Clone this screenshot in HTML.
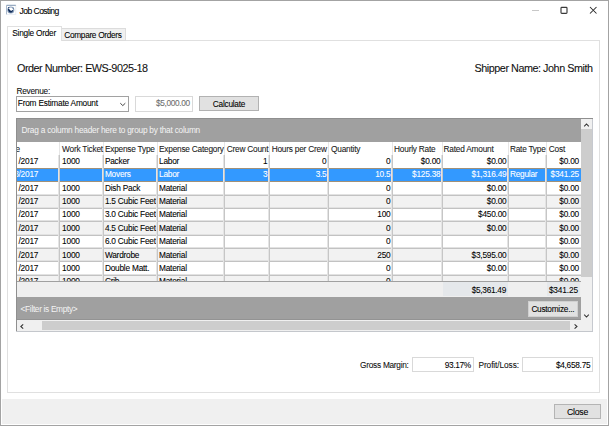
<!DOCTYPE html>
<html><head><meta charset="utf-8"><style>
html,body{margin:0;padding:0;width:609px;height:426px;overflow:hidden;background:#fff;}
body{position:relative;font-family:"Liberation Sans",sans-serif;}
.t{position:absolute;line-height:1;white-space:pre;-webkit-text-stroke:0.08px currentColor;}
.b{position:absolute;}
svg{position:absolute;}
</style></head><body>
<div class="b" style="left:0px;top:0px;width:609px;height:426px;border:1px solid #a3a3a3;box-sizing:border-box;"></div>
<svg style="left:4px;top:3px" width="14" height="14" viewBox="0 0 14 14">
<rect x="2.5" y="2.3" width="9.3" height="9" fill="none" stroke="#e3e9f1" stroke-width="0.8"/>
<path d="M2.6 2.3 H11.8" stroke="#7890ad" stroke-width="0.9"/>
<path d="M2.5 2.3 V11.3" stroke="#a3b3c7" stroke-width="0.9"/>
<circle cx="6.8" cy="7" r="3" fill="none" stroke="#8ea3be" stroke-width="1.1"/>
<path d="M3.9 6.0 Q4.2 9.9 7.1 9.8 Q9.0 9.5 9.3 6.7 L8.2 7.2 Q6.6 8.8 5.2 6.0 Z" fill="#0f2c5a"/>
<circle cx="4.6" cy="4.7" r="0.75" fill="#2f4d7b"/>
<circle cx="9.1" cy="5.1" r="0.65" fill="#45628c"/>
</svg>
<div class="t" style="top:6.82px;font-size:8.6px;color:#000;letter-spacing:-0.56px;left:19.50px;">Job Costing</div>
<div class="b" style="left:532px;top:10px;width:7px;height:1px;background:#c8c8c8;"></div>
<svg style="left:559px;top:6px" width="10" height="10" viewBox="0 0 10 10"><rect x="2" y="1.4" width="6" height="6" rx="0.8" fill="none" stroke="#3a3a3a" stroke-width="1.15"/></svg>
<svg style="left:589px;top:6px" width="10" height="10" viewBox="0 0 10 10"><path d="M1 1 L7.5 7.5 M7.5 1 L1 7.5" stroke="#2a2a2a" stroke-width="1.05"/></svg>
<div class="b" style="left:7px;top:40px;width:593px;height:353px;background:#fff;border:1px solid #e0e0e0;box-sizing:border-box;"></div>
<div class="b" style="left:61px;top:28px;width:65px;height:13px;background:#f0f0f0;border:1px solid #dcdcdc;box-sizing:border-box;"></div>
<div class="b" style="left:7px;top:26px;width:55px;height:15px;background:#fff;border:1px solid #e0e0e0;box-sizing:border-box;border-bottom:none;"></div>
<div class="t" style="top:29.17px;font-size:8.3px;color:#000;letter-spacing:-0.245px;left:12.30px;">Single Order</div>
<div class="t" style="top:30.97px;font-size:8.3px;color:#000;letter-spacing:-0.323px;left:64.30px;">Compare Orders</div>
<div class="t" style="top:62.56px;font-size:10.8px;color:#111;letter-spacing:-0.49px;left:17.00px;">Order Number: EWS-9025-18</div>
<div class="t" style="top:62.86px;font-size:10.8px;color:#111;letter-spacing:-0.457px;left:474.50px;">Shipper Name: John Smith</div>
<div class="t" style="top:86.57px;font-size:8.3px;color:#111;letter-spacing:-0.257px;left:16.50px;">Revenue:</div>
<div class="b" style="left:16px;top:96px;width:113px;height:16px;background:#fff;border:1px solid #a2a2a2;box-sizing:border-box;"></div>
<div class="t" style="top:99.27px;font-size:8.3px;color:#000;letter-spacing:-0.216px;left:17.80px;">From Estimate Amount</div>
<svg style="left:119px;top:101px" width="8" height="6" viewBox="0 0 8 6"><path d="M1.3 2.2 L3.8 4.6 L6.3 2.2" stroke="#444" stroke-width="1" fill="none"/></svg>
<div class="b" style="left:135px;top:96px;width:58px;height:16px;background:#fff;border:1px solid #d9d9d9;box-sizing:border-box;"></div>
<div class="t" style="top:99.17px;font-size:8.3px;color:#6d6d6d;letter-spacing:-0.363px;left:156.10px;">$5,000.00</div>
<div class="b" style="left:199px;top:96px;width:60px;height:15px;background:#e1e1e1;border:1px solid #b2b2b2;box-sizing:border-box;"></div>
<div class="t" style="top:99.77px;font-size:8.3px;color:#000;letter-spacing:-0.25px;left:212.80px;">Calculate</div>
<div class="b" style="left:16px;top:118px;width:577px;height:214px;background:#fff;border:1px solid #8f8f8f;box-sizing:border-box;"></div>
<div class="b" style="left:592px;top:119px;width:1px;height:213px;background:#c6c9cf;"></div>
<div class="b" style="left:17px;top:119px;width:564px;height:23px;background:#a0a0a0;"></div>
<div class="t" style="top:126.27px;font-size:8.3px;color:#f4f4f4;letter-spacing:-0.238px;left:21.60px;-webkit-text-stroke:0;">Drag a column header here to group by that column</div>
<div class="b" style="left:59px;top:142px;width:1px;height:13px;background:#e6e6e6;"></div>
<div class="b" style="left:103px;top:142px;width:1px;height:13px;background:#e6e6e6;"></div>
<div class="b" style="left:157px;top:142px;width:1px;height:13px;background:#e6e6e6;"></div>
<div class="b" style="left:224px;top:142px;width:1px;height:13px;background:#e6e6e6;"></div>
<div class="b" style="left:269px;top:142px;width:1px;height:13px;background:#e6e6e6;"></div>
<div class="b" style="left:328px;top:142px;width:1px;height:13px;background:#e6e6e6;"></div>
<div class="b" style="left:392px;top:142px;width:1px;height:13px;background:#e6e6e6;"></div>
<div class="b" style="left:442px;top:142px;width:1px;height:13px;background:#e6e6e6;"></div>
<div class="b" style="left:508px;top:142px;width:1px;height:13px;background:#e6e6e6;"></div>
<div class="b" style="left:546px;top:142px;width:1px;height:13px;background:#e6e6e6;"></div>
<div class="b" style="left:17px;top:142px;width:564px;height:139px;overflow:hidden">
<div class="b" style="left:0.00px;top:13.60px;width:563.50px;height:13.35px;background:#ffffff"></div>
<div class="b" style="left:0.00px;top:25.95px;width:563.50px;height:1.00px;background:#a09078"></div>
<div class="t" style="top:15.07px;font-size:8.3px;color:#000;letter-spacing:-0.22px;right:542.80px;">/2017</div>
<div class="t" style="top:15.07px;font-size:8.3px;color:#000;letter-spacing:-0.22px;left:45.10px;">1000</div>
<div class="t" style="top:15.07px;font-size:8.3px;color:#000;letter-spacing:-0.22px;left:87.90px;">Packer</div>
<div class="t" style="top:15.07px;font-size:8.3px;color:#000;letter-spacing:-0.22px;left:142.00px;">Labor</div>
<div class="t" style="top:15.07px;font-size:8.3px;color:#000;letter-spacing:-0.22px;right:313.50px;">1</div>
<div class="t" style="top:15.07px;font-size:8.3px;color:#000;letter-spacing:-0.22px;right:254.50px;">0</div>
<div class="t" style="top:15.07px;font-size:8.3px;color:#000;letter-spacing:-0.22px;right:190.50px;">0</div>
<div class="t" style="top:15.07px;font-size:8.3px;color:#000;letter-spacing:-0.22px;right:140.50px;">$0.00</div>
<div class="t" style="top:15.07px;font-size:8.3px;color:#000;letter-spacing:-0.22px;right:74.50px;">$0.00</div>
<div class="t" style="top:15.07px;font-size:8.3px;color:#000;letter-spacing:-0.22px;right:2.00px;">$0.00</div>
<div class="b" style="left:0.00px;top:26.95px;width:563.50px;height:13.35px;background:#3399ff"></div>
<div class="b" style="left:0.00px;top:39.30px;width:563.50px;height:1.00px;background:#a09078"></div>
<div class="t" style="top:28.42px;font-size:8.3px;color:#ffffff;letter-spacing:-0.22px;right:542.80px;">8/2017</div>
<div class="t" style="top:28.42px;font-size:8.3px;color:#ffffff;letter-spacing:-0.22px;left:87.90px;">Movers</div>
<div class="t" style="top:28.42px;font-size:8.3px;color:#ffffff;letter-spacing:-0.22px;left:142.00px;">Labor</div>
<div class="t" style="top:28.42px;font-size:8.3px;color:#ffffff;letter-spacing:-0.22px;right:313.50px;">3</div>
<div class="t" style="top:28.42px;font-size:8.3px;color:#ffffff;letter-spacing:-0.22px;right:254.50px;">3.5</div>
<div class="t" style="top:28.42px;font-size:8.3px;color:#ffffff;letter-spacing:-0.22px;right:190.50px;">10.5</div>
<div class="t" style="top:28.42px;font-size:8.3px;color:#ffffff;letter-spacing:-0.22px;right:140.50px;">$125.38</div>
<div class="t" style="top:28.42px;font-size:8.3px;color:#ffffff;letter-spacing:-0.22px;right:74.50px;">$1,316.49</div>
<div class="t" style="top:28.42px;font-size:8.3px;color:#ffffff;letter-spacing:-0.22px;left:492.90px;">Regular</div>
<div class="t" style="top:28.42px;font-size:8.3px;color:#ffffff;letter-spacing:-0.22px;right:2.00px;">$341.25</div>
<div class="b" style="left:0.00px;top:40.30px;width:563.50px;height:13.35px;background:#ffffff"></div>
<div class="b" style="left:0.00px;top:51.65px;width:563.50px;height:1.00px;background:#e2e2e2"></div>
<div class="b" style="left:0.00px;top:52.65px;width:563.50px;height:1.00px;background:#c2c2c2"></div>
<div class="t" style="top:41.77px;font-size:8.3px;color:#000;letter-spacing:-0.22px;right:542.80px;">/2017</div>
<div class="t" style="top:41.77px;font-size:8.3px;color:#000;letter-spacing:-0.22px;left:45.10px;">1000</div>
<div class="t" style="top:41.77px;font-size:8.3px;color:#000;letter-spacing:-0.22px;left:87.90px;">Dish Pack</div>
<div class="t" style="top:41.77px;font-size:8.3px;color:#000;letter-spacing:-0.22px;left:142.00px;">Material</div>
<div class="t" style="top:41.77px;font-size:8.3px;color:#000;letter-spacing:-0.22px;right:190.50px;">0</div>
<div class="t" style="top:41.77px;font-size:8.3px;color:#000;letter-spacing:-0.22px;right:74.50px;">$0.00</div>
<div class="t" style="top:41.77px;font-size:8.3px;color:#000;letter-spacing:-0.22px;right:2.00px;">$0.00</div>
<div class="b" style="left:0.00px;top:53.65px;width:563.50px;height:13.35px;background:#f2f2f2"></div>
<div class="b" style="left:0.00px;top:65.00px;width:563.50px;height:1.00px;background:#e2e2e2"></div>
<div class="b" style="left:0.00px;top:66.00px;width:563.50px;height:1.00px;background:#c2c2c2"></div>
<div class="t" style="top:55.12px;font-size:8.3px;color:#000;letter-spacing:-0.22px;right:542.80px;">/2017</div>
<div class="t" style="top:55.12px;font-size:8.3px;color:#000;letter-spacing:-0.22px;left:45.10px;">1000</div>
<div class="t" style="top:55.12px;font-size:8.3px;color:#000;letter-spacing:-0.22px;left:87.90px;">1.5 Cubic Feet</div>
<div class="t" style="top:55.12px;font-size:8.3px;color:#000;letter-spacing:-0.22px;left:142.00px;">Material</div>
<div class="t" style="top:55.12px;font-size:8.3px;color:#000;letter-spacing:-0.22px;right:190.50px;">0</div>
<div class="t" style="top:55.12px;font-size:8.3px;color:#000;letter-spacing:-0.22px;right:74.50px;">$0.00</div>
<div class="t" style="top:55.12px;font-size:8.3px;color:#000;letter-spacing:-0.22px;right:2.00px;">$0.00</div>
<div class="b" style="left:0.00px;top:67.00px;width:563.50px;height:13.35px;background:#ffffff"></div>
<div class="b" style="left:0.00px;top:78.35px;width:563.50px;height:1.00px;background:#e2e2e2"></div>
<div class="b" style="left:0.00px;top:79.35px;width:563.50px;height:1.00px;background:#c2c2c2"></div>
<div class="t" style="top:68.47px;font-size:8.3px;color:#000;letter-spacing:-0.22px;right:542.80px;">/2017</div>
<div class="t" style="top:68.47px;font-size:8.3px;color:#000;letter-spacing:-0.22px;left:45.10px;">1000</div>
<div class="t" style="top:68.47px;font-size:8.3px;color:#000;letter-spacing:-0.22px;left:87.90px;">3.0 Cubic Feet</div>
<div class="t" style="top:68.47px;font-size:8.3px;color:#000;letter-spacing:-0.22px;left:142.00px;">Material</div>
<div class="t" style="top:68.47px;font-size:8.3px;color:#000;letter-spacing:-0.22px;right:190.50px;">100</div>
<div class="t" style="top:68.47px;font-size:8.3px;color:#000;letter-spacing:-0.22px;right:74.50px;">$450.00</div>
<div class="t" style="top:68.47px;font-size:8.3px;color:#000;letter-spacing:-0.22px;right:2.00px;">$0.00</div>
<div class="b" style="left:0.00px;top:80.35px;width:563.50px;height:13.35px;background:#f2f2f2"></div>
<div class="b" style="left:0.00px;top:91.70px;width:563.50px;height:1.00px;background:#e2e2e2"></div>
<div class="b" style="left:0.00px;top:92.70px;width:563.50px;height:1.00px;background:#c2c2c2"></div>
<div class="t" style="top:81.82px;font-size:8.3px;color:#000;letter-spacing:-0.22px;right:542.80px;">/2017</div>
<div class="t" style="top:81.82px;font-size:8.3px;color:#000;letter-spacing:-0.22px;left:45.10px;">1000</div>
<div class="t" style="top:81.82px;font-size:8.3px;color:#000;letter-spacing:-0.22px;left:87.90px;">4.5 Cubic Feet</div>
<div class="t" style="top:81.82px;font-size:8.3px;color:#000;letter-spacing:-0.22px;left:142.00px;">Material</div>
<div class="t" style="top:81.82px;font-size:8.3px;color:#000;letter-spacing:-0.22px;right:190.50px;">0</div>
<div class="t" style="top:81.82px;font-size:8.3px;color:#000;letter-spacing:-0.22px;right:74.50px;">$0.00</div>
<div class="t" style="top:81.82px;font-size:8.3px;color:#000;letter-spacing:-0.22px;right:2.00px;">$0.00</div>
<div class="b" style="left:0.00px;top:93.70px;width:563.50px;height:13.35px;background:#ffffff"></div>
<div class="b" style="left:0.00px;top:105.05px;width:563.50px;height:1.00px;background:#e2e2e2"></div>
<div class="b" style="left:0.00px;top:106.05px;width:563.50px;height:1.00px;background:#c2c2c2"></div>
<div class="t" style="top:95.17px;font-size:8.3px;color:#000;letter-spacing:-0.22px;right:542.80px;">/2017</div>
<div class="t" style="top:95.17px;font-size:8.3px;color:#000;letter-spacing:-0.22px;left:45.10px;">1000</div>
<div class="t" style="top:95.17px;font-size:8.3px;color:#000;letter-spacing:-0.22px;left:87.90px;">6.0 Cubic Feet</div>
<div class="t" style="top:95.17px;font-size:8.3px;color:#000;letter-spacing:-0.22px;left:142.00px;">Material</div>
<div class="t" style="top:95.17px;font-size:8.3px;color:#000;letter-spacing:-0.22px;right:190.50px;">0</div>
<div class="t" style="top:95.17px;font-size:8.3px;color:#000;letter-spacing:-0.22px;right:2.00px;">$0.00</div>
<div class="b" style="left:0.00px;top:107.05px;width:563.50px;height:13.35px;background:#f2f2f2"></div>
<div class="b" style="left:0.00px;top:118.40px;width:563.50px;height:1.00px;background:#e2e2e2"></div>
<div class="b" style="left:0.00px;top:119.40px;width:563.50px;height:1.00px;background:#c2c2c2"></div>
<div class="t" style="top:108.52px;font-size:8.3px;color:#000;letter-spacing:-0.22px;right:542.80px;">/2017</div>
<div class="t" style="top:108.52px;font-size:8.3px;color:#000;letter-spacing:-0.22px;left:45.10px;">1000</div>
<div class="t" style="top:108.52px;font-size:8.3px;color:#000;letter-spacing:-0.22px;left:87.90px;">Wardrobe</div>
<div class="t" style="top:108.52px;font-size:8.3px;color:#000;letter-spacing:-0.22px;left:142.00px;">Material</div>
<div class="t" style="top:108.52px;font-size:8.3px;color:#000;letter-spacing:-0.22px;right:190.50px;">250</div>
<div class="t" style="top:108.52px;font-size:8.3px;color:#000;letter-spacing:-0.22px;right:74.50px;">$3,595.00</div>
<div class="t" style="top:108.52px;font-size:8.3px;color:#000;letter-spacing:-0.22px;right:2.00px;">$0.00</div>
<div class="b" style="left:0.00px;top:120.40px;width:563.50px;height:13.35px;background:#ffffff"></div>
<div class="b" style="left:0.00px;top:131.75px;width:563.50px;height:1.00px;background:#e2e2e2"></div>
<div class="b" style="left:0.00px;top:132.75px;width:563.50px;height:1.00px;background:#c2c2c2"></div>
<div class="t" style="top:121.87px;font-size:8.3px;color:#000;letter-spacing:-0.22px;right:542.80px;">/2017</div>
<div class="t" style="top:121.87px;font-size:8.3px;color:#000;letter-spacing:-0.22px;left:45.10px;">1000</div>
<div class="t" style="top:121.87px;font-size:8.3px;color:#000;letter-spacing:-0.22px;left:87.90px;">Double Matt.</div>
<div class="t" style="top:121.87px;font-size:8.3px;color:#000;letter-spacing:-0.22px;left:142.00px;">Material</div>
<div class="t" style="top:121.87px;font-size:8.3px;color:#000;letter-spacing:-0.22px;right:190.50px;">0</div>
<div class="t" style="top:121.87px;font-size:8.3px;color:#000;letter-spacing:-0.22px;right:74.50px;">$0.00</div>
<div class="t" style="top:121.87px;font-size:8.3px;color:#000;letter-spacing:-0.22px;right:2.00px;">$0.00</div>
<div class="b" style="left:0.00px;top:133.75px;width:563.50px;height:13.35px;background:#f2f2f2"></div>
<div class="b" style="left:0.00px;top:145.10px;width:563.50px;height:1.00px;background:#e2e2e2"></div>
<div class="b" style="left:0.00px;top:146.10px;width:563.50px;height:1.00px;background:#c2c2c2"></div>
<div class="t" style="top:135.22px;font-size:8.3px;color:#000;letter-spacing:-0.22px;right:542.80px;">/2017</div>
<div class="t" style="top:135.22px;font-size:8.3px;color:#000;letter-spacing:-0.22px;left:45.10px;">1000</div>
<div class="t" style="top:135.22px;font-size:8.3px;color:#000;letter-spacing:-0.22px;left:87.90px;">Crib</div>
<div class="t" style="top:135.22px;font-size:8.3px;color:#000;letter-spacing:-0.22px;left:142.00px;">Material</div>
<div class="t" style="top:135.22px;font-size:8.3px;color:#000;letter-spacing:-0.22px;right:190.50px;">0</div>
<div class="t" style="top:135.22px;font-size:8.3px;color:#000;letter-spacing:-0.22px;right:2.00px;">$0.00</div>
<div class="b" style="left:41.00px;top:13.00px;width:1.00px;height:126.00px;background:#e4e4e4"></div>
<div class="b" style="left:42.00px;top:13.00px;width:1.00px;height:126.00px;background:#c6c6c6"></div>
<div class="b" style="left:85.00px;top:13.00px;width:1.00px;height:126.00px;background:#e4e4e4"></div>
<div class="b" style="left:86.00px;top:13.00px;width:1.00px;height:126.00px;background:#c6c6c6"></div>
<div class="b" style="left:139.00px;top:13.00px;width:1.00px;height:126.00px;background:#e4e4e4"></div>
<div class="b" style="left:140.00px;top:13.00px;width:1.00px;height:126.00px;background:#c6c6c6"></div>
<div class="b" style="left:206.00px;top:13.00px;width:1.00px;height:126.00px;background:#e4e4e4"></div>
<div class="b" style="left:207.00px;top:13.00px;width:1.00px;height:126.00px;background:#c6c6c6"></div>
<div class="b" style="left:251.00px;top:13.00px;width:1.00px;height:126.00px;background:#e4e4e4"></div>
<div class="b" style="left:252.00px;top:13.00px;width:1.00px;height:126.00px;background:#c6c6c6"></div>
<div class="b" style="left:310.00px;top:13.00px;width:1.00px;height:126.00px;background:#e4e4e4"></div>
<div class="b" style="left:311.00px;top:13.00px;width:1.00px;height:126.00px;background:#c6c6c6"></div>
<div class="b" style="left:374.00px;top:13.00px;width:1.00px;height:126.00px;background:#e4e4e4"></div>
<div class="b" style="left:375.00px;top:13.00px;width:1.00px;height:126.00px;background:#c6c6c6"></div>
<div class="b" style="left:424.00px;top:13.00px;width:1.00px;height:126.00px;background:#e4e4e4"></div>
<div class="b" style="left:425.00px;top:13.00px;width:1.00px;height:126.00px;background:#c6c6c6"></div>
<div class="b" style="left:490.00px;top:13.00px;width:1.00px;height:126.00px;background:#e4e4e4"></div>
<div class="b" style="left:491.00px;top:13.00px;width:1.00px;height:126.00px;background:#c6c6c6"></div>
<div class="b" style="left:528.00px;top:13.00px;width:1.00px;height:126.00px;background:#e4e4e4"></div>
<div class="b" style="left:529.00px;top:13.00px;width:1.00px;height:126.00px;background:#c6c6c6"></div>
<div class="t" style="top:2.87px;font-size:8.3px;color:#1a1a1a;letter-spacing:-0.22px;left:-1.50px;">e</div>
<div class="t" style="top:2.87px;font-size:8.3px;color:#1a1a1a;letter-spacing:-0.22px;left:45.10px;">Work Ticket</div>
<div class="t" style="top:2.87px;font-size:8.3px;color:#1a1a1a;letter-spacing:-0.22px;left:87.90px;">Expense Type</div>
<div class="t" style="top:2.87px;font-size:8.3px;color:#1a1a1a;letter-spacing:-0.22px;left:142.00px;">Expense Category</div>
<div class="t" style="top:2.87px;font-size:8.3px;color:#1a1a1a;letter-spacing:-0.22px;left:209.70px;">Crew Count</div>
<div class="t" style="top:2.87px;font-size:8.3px;color:#1a1a1a;letter-spacing:-0.22px;left:254.70px;">Hours per Crew</div>
<div class="t" style="top:2.87px;font-size:8.3px;color:#1a1a1a;letter-spacing:-0.22px;left:314.10px;">Quantity</div>
<div class="t" style="top:2.87px;font-size:8.3px;color:#1a1a1a;letter-spacing:-0.22px;left:377.10px;">Hourly Rate</div>
<div class="t" style="top:2.87px;font-size:8.3px;color:#1a1a1a;letter-spacing:-0.22px;left:426.60px;">Rated Amount</div>
<div class="t" style="top:2.87px;font-size:8.3px;color:#1a1a1a;letter-spacing:-0.22px;left:492.90px;">Rate Type</div>
<div class="t" style="top:2.87px;font-size:8.3px;color:#1a1a1a;letter-spacing:-0.22px;left:531.80px;">Cost</div>
</div>
<div class="b" style="left:17px;top:281px;width:564px;height:16px;background:#efefef;"></div>
<div class="b" style="left:17px;top:281px;width:564px;height:1px;background:#a0a0a0;"></div>
<div class="b" style="left:443px;top:282px;width:65px;height:14px;background:#e5e8eb;"></div>
<div class="b" style="left:547px;top:282px;width:33px;height:14px;background:#e5e8eb;"></div>
<div class="t" style="top:285.57px;font-size:8.3px;color:#000;letter-spacing:-0.288px;left:471.70px;">$5,361.49</div>
<div class="t" style="top:285.57px;font-size:8.3px;color:#000;letter-spacing:-0.133px;left:548.90px;">$341.25</div>
<div class="b" style="left:17px;top:297px;width:564px;height:23px;background:#a0a0a0;"></div>
<div class="b" style="left:17px;top:319px;width:564px;height:1px;background:#939393;"></div>
<div class="t" style="top:305.37px;font-size:8.3px;color:#f4f4f4;letter-spacing:-0.325px;left:20.60px;-webkit-text-stroke:0;">&lt;Filter is Empty&gt;</div>
<div class="b" style="left:528px;top:301px;width:50px;height:16px;background:#e1e1e1;border:1px solid #d0d0d0;box-sizing:border-box;"></div>
<div class="t" style="top:304.97px;font-size:8.3px;color:#000;letter-spacing:-0.273px;left:531.40px;">Customize...</div>
<div class="b" style="left:17px;top:320px;width:564px;height:11px;background:#f0f0f0;"></div>
<div class="b" style="left:42px;top:321px;width:528px;height:9px;background:#cdcdcd;"></div>
<div class="b" style="left:16px;top:331px;width:577px;height:1px;background:#c4c7cc;"></div>
<svg style="left:19px;top:323px" width="6" height="7" viewBox="0 0 6 7"><path d="M4.2 1.3 L1.8 3.5 L4.2 5.7" stroke="#333" stroke-width="1.05" fill="none"/></svg>
<svg style="left:573px;top:323px" width="6" height="7" viewBox="0 0 6 7"><path d="M1.6 1.3 L4.0 3.5 L1.6 5.7" stroke="#333" stroke-width="1.05" fill="none"/></svg>
<div class="b" style="left:581px;top:119px;width:11px;height:212px;background:#f0f0f0;"></div>
<div class="b" style="left:581px;top:129px;width:11px;height:148px;background:#cdcdcd;"></div>
<svg style="left:583px;top:122px" width="7" height="6" viewBox="0 0 7 6"><path d="M1.2 4.3 L3.5 2 L5.8 4.3" stroke="#333" stroke-width="1.05" fill="none"/></svg>
<svg style="left:583px;top:313px" width="7" height="6" viewBox="0 0 7 6"><path d="M1.2 1.7 L3.5 4 L5.8 1.7" stroke="#333" stroke-width="1.05" fill="none"/></svg>
<div class="t" style="top:360.97px;font-size:8.3px;color:#111;letter-spacing:-0.275px;left:360.10px;">Gross Margin:</div>
<div class="b" style="left:412px;top:357px;width:62px;height:15px;background:#fff;border:1px solid #d9d9d9;box-sizing:border-box;"></div>
<div class="t" style="top:360.97px;font-size:8.3px;color:#000;letter-spacing:-0.34px;left:444.70px;">93.17%</div>
<div class="t" style="top:360.97px;font-size:8.3px;color:#111;letter-spacing:-0.091px;left:478.50px;">Profit/Loss:</div>
<div class="b" style="left:522px;top:357px;width:71px;height:15px;background:#fff;border:1px solid #d9d9d9;box-sizing:border-box;"></div>
<div class="t" style="top:360.97px;font-size:8.3px;color:#000;letter-spacing:-0.275px;left:555.90px;">$4,658.75</div>
<div class="b" style="left:2px;top:399px;width:605px;height:25px;background:#f0f0f0;"></div>
<div class="b" style="left:554px;top:404px;width:47px;height:15px;background:#e1e1e1;border:1px solid #b4b4b4;box-sizing:border-box;"></div>
<div class="t" style="top:407.75px;font-size:8.8px;color:#000;letter-spacing:-0.275px;left:567.00px;">Close</div>
</body></html>
